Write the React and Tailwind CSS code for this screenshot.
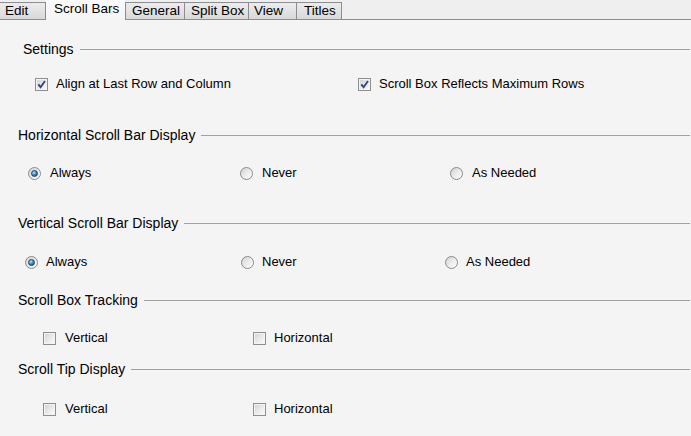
import React from "react";

function Check({ checked }) {
  return (
    <span className="flex h-[13px] w-[13px] shrink-0 border border-[#8e8f8f] bg-[#f4f4f4] p-[1px]">
      <span className="relative flex-1 bg-gradient-to-br from-[#d4d4d4] via-[#e9e9e9] to-[#fafafa]">
        {checked && (
          <svg viewBox="0 0 9 9" className="absolute left-0 top-0 h-[9px] w-[9px]">
            <path d="M1.3 4.3 L3.6 7.2 L8 1" fill="none" stroke="#33458a" strokeWidth="1.9" />
          </svg>
        )}
      </span>
    </span>
  );
}

function Radio({ checked }) {
  return (
    <span className="flex h-[13px] w-[13px] shrink-0 items-center justify-center rounded-full border border-[#8a8a8a] bg-gradient-to-br from-[#d2d2d2] via-[#ebebeb] to-[#fdfdfd]">
      {checked && (
        <span className="h-[7px] w-[7px] rounded-full border border-[#1d3f5e] bg-[radial-gradient(circle_at_35%_30%,#b9e3fb,#2b86c7_55%,#0d4a7c)]" />
      )}
    </span>
  );
}

function Header({ children, left = 18 }) {
  return (
    <div className="flex h-[16px] items-center text-[14px]" style={{ paddingLeft: left }}>
      <span className="whitespace-nowrap">{children}</span>
      <span className="ml-[6px] mr-[1px] h-px flex-1 bg-[#a0a0a0]" />
    </div>
  );
}

function Item({ kind, checked, label, width, gap = 8 }) {
  return (
    <div className="flex h-[16px] items-center" style={{ width, gap }}>
      {kind === "check" ? <Check checked={checked} /> : <Radio checked={checked} />}
      <span className="whitespace-nowrap">{label}</span>
    </div>
  );
}

function Tab({ label, selected, className = "" }) {
  if (selected) {
    return (
      <div className={"flex h-[20px] items-start bg-gradient-to-b from-[#fbfbfb] to-[#f4f4f4] pt-[1px] " + className}>
        <span>{label}</span>
      </div>
    );
  }
  return (
    <div
      className={
        "mt-[2px] flex h-[18px] items-start border-y border-[#8b8d92] bg-gradient-to-b from-[#ececec] to-[#d9d9d9] " +
        className
      }
    >
      <span>{label}</span>
    </div>
  );
}

export default function App() {
  return (
    <div
      className="h-[436px] w-[691px] overflow-hidden bg-[#f4f4f4] text-[13px] leading-[16px] text-black"
      style={{ fontFamily: '"Liberation Sans", Arial, sans-serif' }}
    >
      <div className="flex h-[20px] bg-[#efefef] text-[13.5px]">
        <Tab label="Edit" className="w-[46px] border-r pl-[5px]" />
        <Tab label="Scroll Bars" selected className="w-[79px] pl-[8px]" />
        <Tab label="General" className="w-[59px] border-l pl-[6px]" />
        <Tab label="Split Box" className="w-[64px] border-l pl-[6px]" />
        <Tab label="View" className="w-[48px] border-l pl-[5px]" />
        <Tab label="Titles" className="w-[46px] border-x pl-[7px]" />
        <div className="flex-1 border-b border-[#8b8d92]" />
      </div>

      <div className="mt-[21px]">
        <Header left={23}>Settings</Header>
      </div>
      <div className="mt-[19px] flex pl-[35px]">
        <Item kind="check" checked label="Align at Last Row and Column" width={323} />
        <Item kind="check" checked label="Scroll Box Reflects Maximum Rows" />
      </div>

      <div className="mt-[35px]">
        <Header>Horizontal Scroll Bar Display</Header>
      </div>
      <div className="mt-[22px] flex pl-[28px]">
        <Item kind="radio" checked label="Always" width={212} gap={9} />
        <Item kind="radio" label="Never" width={210} gap={9} />
        <Item kind="radio" label="As Needed" gap={9} />
      </div>

      <div className="mt-[34px]">
        <Header>Vertical Scroll Bar Display</Header>
      </div>
      <div className="mt-[23px] flex pl-[25px]">
        <Item kind="radio" checked label="Always" width={216} gap={8} />
        <Item kind="radio" label="Never" width={204} gap={8} />
        <Item kind="radio" label="As Needed" gap={8} />
      </div>

      <div className="mt-[22px]">
        <Header>Scroll Box Tracking</Header>
      </div>
      <div className="mt-[22px] flex pl-[43px]">
        <Item kind="check" label="Vertical" width={210} gap={9} />
        <Item kind="check" label="Horizontal" gap={8} />
      </div>

      <div className="mt-[15px]">
        <Header>Scroll Tip Display</Header>
      </div>
      <div className="mt-[24px] flex pl-[43px]">
        <Item kind="check" label="Vertical" width={210} gap={9} />
        <Item kind="check" label="Horizontal" gap={8} />
      </div>
    </div>
  );
}
